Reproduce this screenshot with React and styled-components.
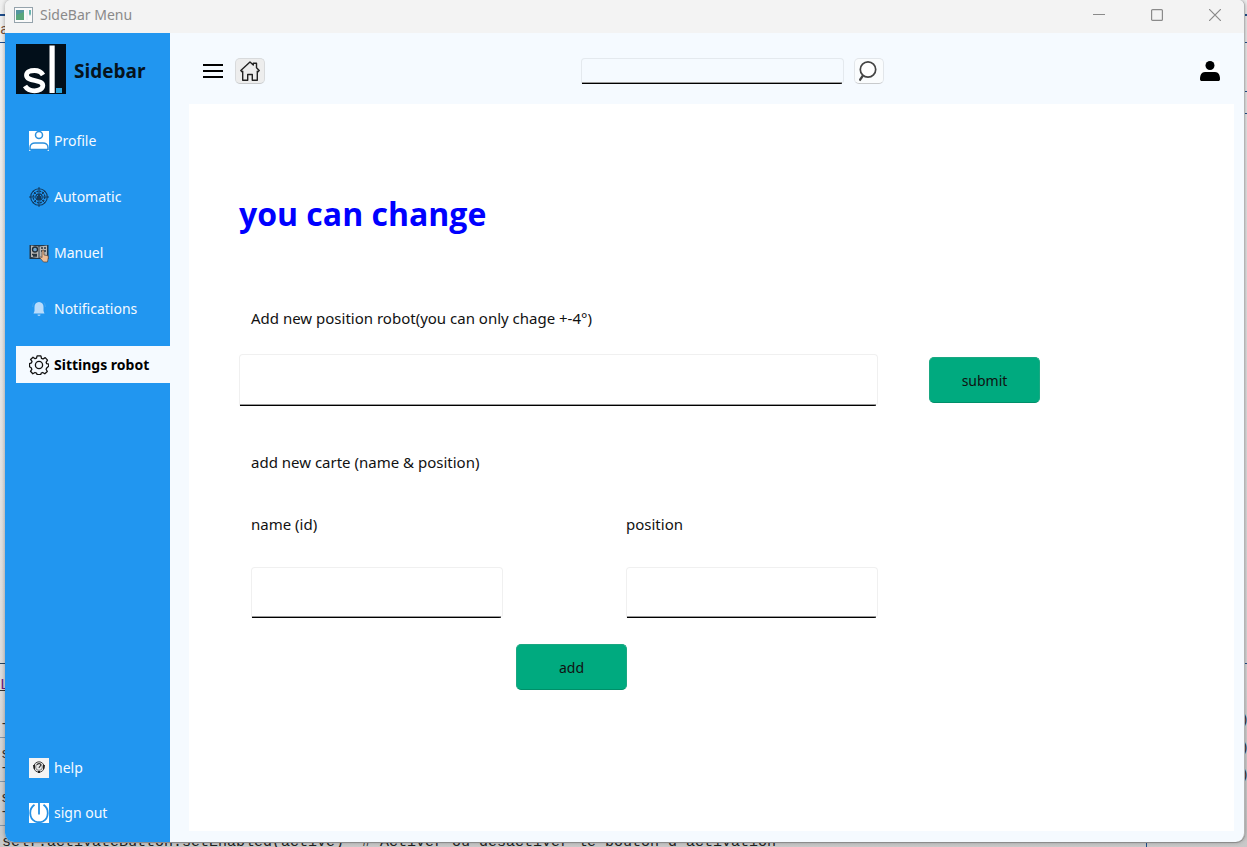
import React from "react";
import styled, { createGlobalStyle } from "styled-components";

const GlobalStyle = createGlobalStyle`
  *, *::before, *::after { box-sizing: border-box; }
  body {
    margin: 0;
    font-family: "Noto Sans", "Open Sans", sans-serif;
    font-size: 15px;
    line-height: 24px;
    color: #111;
  }
  button, input { font: inherit; color: inherit; }
`;

/* ---------- editor visible behind the window ---------- */

const Desktop = styled.div`
  position: relative;
  display: flex;
  min-height: 100vh;
  padding: 0 2px 5px 5px;
  overflow: hidden;
  background: linear-gradient(#f0f0f0, #e6e6e6 40%, #dcdcdc 80%, #c8c8c8);
`;

const Rule = styled.span`
  position: absolute;
  top: ${(p) => p.$y}px;
  ${(p) => (p.$side === "right" ? "right: 0;" : "left: 0;")}
  width: 5px;
  height: ${(p) => p.$h || 1}px;
  background: ${(p) => p.$color || "#1f4e8c"};
`;

const CodeChar = styled.span`
  position: absolute;
  top: ${(p) => p.$y}px;
  ${(p) => (p.$side === "right" ? "right: -2px;" : `left: ${p.$x || 0}px;`)}
  font: 15px/12px "Liberation Mono", monospace;
  color: ${(p) => p.$color || "#333"};
`;

const CodeLine = styled.code`
  position: absolute;
  left: 2px;
  bottom: -6px;
  font: 15px/20px "Liberation Mono", monospace;
  color: #222;
  white-space: pre;
`;

const PageEdge = styled.span`
  position: absolute;
  right: 100px;
  bottom: 0;
  width: 1px;
  height: 8px;
  background: #1f4e8c;
`;

/* ---------- window frame ---------- */

const Window = styled.div`
  position: relative;
  flex: 1;
  display: flex;
  flex-direction: column;
  border-right: 1px solid #b4b4b4;
  border-radius: 6px 6px 9px 9px;
  overflow: hidden;
  background: #f5faff;
  box-shadow: 0 1px 0 #8c8c8c, 0 0 4px rgba(0, 0, 0, 0.35);
`;

const TitleBar = styled.header`
  display: flex;
  align-items: center;
  gap: 7px;
  height: 33px;
  padding: 0 15px 4px 9px;
  background: #f3f3f3;
  color: #8a8a8a;
  font-size: 14px;
`;

const WindowTitle = styled.span`
  flex: 1;
`;

const WindowButtons = styled.div`
  display: flex;
  gap: 30px;
`;

const WindowButton = styled.button`
  display: flex;
  align-items: center;
  justify-content: center;
  width: 28px;
  height: 28px;
  padding: 0;
  border: 0;
  background: none;
  color: #8a8a8a;
`;

const Body = styled.div`
  flex: 1;
  display: flex;
`;

/* ---------- sidebar ---------- */

const Sidebar = styled.aside`
  display: flex;
  flex-direction: column;
  flex: none;
  width: 165px;
  padding: 11px 0 11px 11px;
  background: #2196f0;
`;

const Brand = styled.div`
  display: flex;
  align-items: center;
  gap: 8px;
  height: 50px;
  margin-bottom: 28px;
  color: #06131c;
  font-family: "Open Sans", sans-serif;
  font-size: 19px;
  font-weight: 700;
`;

const BrandName = styled.span`
  padding-top: 4px;
`;

const NavList = styled.nav`
  display: flex;
  flex-direction: column;
  gap: ${(p) => p.$gap}px;
  ${(p) => p.$bottom && "margin-top: auto;"}
`;

const NavItem = styled.a`
  display: flex;
  align-items: center;
  gap: 5px;
  height: 37px;
  padding-left: 13px;
  font-size: 14px;
  white-space: nowrap;
  text-decoration: none;
  color: ${(p) => (p.$active ? "#000" : "#f5faff")};
  background: ${(p) => (p.$active ? "#f5faff" : "transparent")};
  font-weight: ${(p) => (p.$active ? 700 : 400)};
  svg { flex: none; }
`;

/* ---------- main area ---------- */

const Main = styled.main`
  flex: 1;
  display: flex;
  flex-direction: column;
  padding-bottom: 11px;
`;

const TopBar = styled.div`
  display: flex;
  align-items: center;
  justify-content: space-between;
  height: 71px;
  padding: 4px 24px 0 33px;
`;

const Group = styled.div`
  display: flex;
  align-items: center;
  gap: ${(p) => p.$gap}px;
`;

const PlainButton = styled.button`
  display: flex;
  padding: 0;
  border: 0;
  background: none;
`;

const ToolButton = styled.button`
  display: flex;
  align-items: center;
  justify-content: center;
  width: 30px;
  height: 26px;
  padding: 0;
  border: 1px solid ${(p) => (p.$pressed ? "#d8dadc" : "#e2e6ea")};
  border-bottom-color: #c8cacc;
  border-radius: 5px;
  background: ${(p) => (p.$pressed ? "#ededed" : "#fafcfd")};
`;

const TextInput = styled.input`
  width: ${(p) => p.$width || "100%"};
  height: ${(p) => p.$height}px;
  padding: 0 8px;
  border: 1px solid ${(p) => p.$edge || "#f0f0f0"};
  border-bottom-color: transparent;
  border-radius: 4px 4px 4px 0;
  outline: none;
  background: linear-gradient(#9a9a9a 50%, #000 50%) left bottom / calc(100% - 2px) 2px no-repeat border-box;
`;

const Content = styled.section`
  flex: 1;
  margin: 0 10px 0 19px;
  padding: 86px 194px 24px 50px;
  background: #fff;
`;

const Heading = styled.h1`
  margin: 0 0 68px;
  color: #00f;
  font-family: "Open Sans", sans-serif;
  font-size: 32px;
  line-height: 48px;
  font-weight: 700;
`;

const FormGrid = styled.form`
  display: grid;
  grid-template-columns: 1fr 111px;
  column-gap: 51px;
  align-items: center;
`;

const Label = styled.label`
  display: block;
  grid-column: 1 / -1;
  padding-left: 12px;
  margin-bottom: 24px;
`;

const CardForm = styled.form`
  margin: 44px 162px 0 12px;
`;

const SectionTitle = styled.p`
  margin: 0 0 38px;
`;

const Fields = styled.div`
  display: grid;
  grid-template-columns: 1fr 1fr;
  column-gap: 123px;
`;

const FieldLabel = styled.label`
  display: block;
  margin-bottom: 31px;
`;

const Actions = styled.div`
  display: flex;
  justify-content: center;
  padding: 26px 0 0 14px;
`;

const ActionButton = styled.button`
  width: 111px;
  height: 46px;
  padding: 2px 0 0;
  border: 1px solid #1aa882;
  border-bottom-color: #008f69;
  border-radius: 5px;
  background: #00aa7f;
  font-size: 14px;
`;

/* ---------- drawings ---------- */

const AppIcon = () => (
  <svg width="19" height="16" viewBox="0 0 19 16">
    <rect x="0.5" y="0.5" width="18" height="15" fill="#fafafa" stroke="#95a3ac" />
    <rect x="2" y="3" width="8" height="10" fill="#5596a0" />
    <path d="M2 13V8l8-3v8z" fill="#58a67c" />
    <path d="M12 3h2v10h-2z" fill="#eef1f4" />
    <path d="M15 3h2v4l-1 2-1-2z" fill="#69b5b0" />
  </svg>
);

const Logo = () => (
  <svg width="50" height="50" viewBox="0 0 50 50">
    <rect width="50" height="50" fill="#020f1a" />
    <path d="M27 31C25 27.500 22 26.500 18.500 26.500c-4.500 0-8 1.500-8 4.700 0 6.800 16.300 3.800 16.300 10.300 0 3.200-3.800 5.300-8.300 5.300-4 0-7.500-1.500-9.500-4.800" fill="none" stroke="#fff" strokeWidth="4.800" />
    <path d="M33.500 1.500h5.200V49h-5.200z" fill="#fff" />
    <path d="M40 44h6v5h-6z" fill="#2ba3dc" />
  </svg>
);

const ProfileIcon = () => (
  <svg width="20" height="20" viewBox="0 0 20 20">
    <rect width="20" height="20" fill="#fff" />
    <circle cx="10" cy="4" r="3.500" fill="#fff" stroke="#2a8fdc" strokeWidth="1.500" />
    <path d="M1 18.500v-2C1 13.500 3.500 12 6 12h8c2.500 0 5 1.500 5 4.500v2z" fill="#fff" stroke="#2a8fdc" strokeWidth="1.500" />
    <path d="M1.500 19h17v1h-17z" fill="#2196f0" />
  </svg>
);

const AutomaticIcon = () => (
  <svg width="20" height="20" viewBox="0 0 20 20" fill="none" stroke="#123a5e">
    <circle cx="10" cy="10" r="8.300" strokeWidth="1.100" />
    <circle cx="10" cy="10" r="5.800" strokeWidth="1.300" strokeDasharray="2 1" />
    <circle cx="10" cy="10" r="3.200" strokeWidth="1.200" />
    <path d="M10 0v6M10 14v6M0 10h6M14 10h6M4 4l3.500 3.500M16 4l-3.500 3.500M4 16l3.500-3.500M16 16l-3.500-3.500" />
    <path d="M8 9h4v4H8zM9 7h2v2H9z" fill="#123a5e" stroke="none" />
  </svg>
);

const ManualIcon = () => (
  <svg width="20" height="20" viewBox="0 0 20 20">
    <path d="M.5 2h19v14H.5z" fill="#22384a" />
    <path d="M2 2.500l7.500 1V15L2 14zM18 2.500l-7.500 1V15l7.500-1z" fill="#b9b7b4" />
    <circle cx="6" cy="6.500" r="2.500" fill="#6fa3cb" stroke="#1f2c36" strokeWidth="1.300" />
    <path d="M3 11.500h5M12 5h2M15 5h2M12 8h5M4 13h4" stroke="#283640" strokeWidth="1.300" />
    <path d="M13 8c0-1.500 2-1.500 2 0v4l3 .5c1 .3 1.500 1 1.300 2L18.500 19h-4L11 15c-.5-1 .8-1.500 1.300-1l.7.600z" fill="#eebd96" stroke="#554238" strokeWidth=".7" />
  </svg>
);

const BellIcon = () => (
  <svg width="20" height="20" viewBox="0 0 20 20">
    <path d="M10 3c-3 0-4.500 2.200-4.500 5v4L4.500 14.500h11l-1-2.500V8c0-2.800-1.500-5-4.500-5z" fill="#b9dcfb" />
    <path d="M8.500 15.500h3c0 2-3 2-3 0z" fill="#9ccdf8" />
    <path d="M5 3.500C4 5 3.700 6.500 3.700 8M15 3.500C16 5 16.300 6.500 16.300 8" stroke="#4aa7f0" strokeWidth=".8" fill="none" />
  </svg>
);

const GearIcon = () => (
  <svg width="20" height="20" viewBox="0 0 20 20" fill="none" stroke="#111" strokeWidth="1.300" strokeLinejoin="round">
    <path d="M8.100.8h3.800l.6 2.500 1.500.7 2.200-1.400 2.300 2.500-1.400 2.200.6 1.400 2 .5v2l-2 1.800-.6 1.300 1.200 2.200-2.500 2.300-2.100-1.300-1.500.6-.5 1.500H8.100l-.6-1.500-1.500-.6-2.200 1.300-2.300-2.500 1.300-2-.6-1.500-1.700-1V8.600l2-.8.5-1.400-1.400-2L4 2.200l2.100 1.500 1.400-.5z" />
    <circle cx="10" cy="10" r="3.600" />
  </svg>
);

const HelpIcon = () => (
  <svg width="20" height="20" viewBox="0 0 20 20">
    <rect width="20" height="20" fill="#f4f4f4" />
    <circle cx="10" cy="9" r="5.200" fill="#e8e8e8" stroke="#444" />
    <circle cx="10" cy="9" r="3.400" fill="none" stroke="#666" strokeWidth=".8" />
    <path d="M8.500 7c0-2 3.200-2 3.200 0 0 1.500-1.600 1.300-1.600 3" fill="none" stroke="#333" strokeWidth="1.100" />
    <path d="M4 7h2v4H5zM14 7h2l-1 4h-1zM9 13h2v2H9z" fill="#222" />
  </svg>
);

const PowerIcon = () => (
  <svg width="20" height="20" viewBox="0 0 20 20" fill="none" stroke="#2490e4" strokeWidth="1.800">
    <rect width="20" height="20" fill="#fff" stroke="none" />
    <path d="M5.500 1.800C-.7 6 .3 15.500 5.800 18.200c2.600 1.200 5.800 1.200 8.400 0C19.700 15.500 20.700 6 14.500 1.800M10 0v11.500" />
  </svg>
);

const MenuIcon = () => (
  <svg width="20" height="14" viewBox="0 0 20 14">
    <path d="M0 0h20v2H0zM0 6h20v2H0zM0 12h20v2H0z" fill="#000" />
  </svg>
);

const HomeIcon = () => (
  <svg width="20" height="20" viewBox="0 0 20 20" fill="none" stroke="#222" strokeWidth="1.400">
    <path d="M.8 9.500L10 1l3.300 3V2.200h3.200v4.600l2.700 2.700-1.200 1.200-.7-.5v9h-5V13.500H7.700v5.700h-5v-9l-.7.500z" strokeLinejoin="round" />
  </svg>
);

const SearchIcon = () => (
  <svg width="20" height="22" viewBox="0 0 20 22" fill="none" stroke="#444">
    <circle cx="9" cy="9.500" r="7.700" fill="#fff" strokeWidth="1.700" />
    <path d="M4 15.500l-3.500 5" strokeWidth="2.200" />
  </svg>
);

const UserIcon = () => (
  <svg width="20" height="20" viewBox="0 0 20 20">
    <rect width="20" height="20" fill="#fff" />
    <circle cx="10" cy="4.500" r="4.500" fill="#000" />
    <path d="M0 18c0-4 1.500-7 5-7h10c3.500 0 5 3 5 7 0 1.500-.7 2-2 2H2c-1.300 0-2-.5-2-2z" fill="#000" />
  </svg>
);

const navItems = [
  { label: "Profile", Icon: ProfileIcon },
  { label: "Automatic", Icon: AutomaticIcon },
  { label: "Manuel", Icon: ManualIcon },
  { label: "Notifications", Icon: BellIcon },
  { label: "Sittings robot", Icon: GearIcon, active: true },
];

const footerItems = [
  { label: "help", Icon: HelpIcon },
  { label: "sign out", Icon: PowerIcon },
];

const Nav = ({ items, gap, bottom }) => (
  <NavList $gap={gap} $bottom={bottom}>
    {items.map(({ label, Icon, active }) => (
      <NavItem key={label} href="#" $active={active}>
        <Icon />
        {label}
      </NavItem>
    ))}
  </NavList>
);

const Backdrop = () => (
  <div aria-hidden="true">
    <Rule $y={14} $h={2} />
    <Rule $y={42} />
    <CodeChar $y={25} $color="#7a5038">a</CodeChar>
    <Rule $y={663} $color="#27455f" />
    <CodeChar $y={680} $color="#6a2080">L</CodeChar>
    <Rule $y={690} $color="#333" />
    {[719, 763, 807].map((y) => (
      <CodeChar key={y} $y={y}>-</CodeChar>
    ))}
    <CodeChar $y={749} $x={1}>s</CodeChar>
    <CodeChar $y={793} $x={1}>s</CodeChar>
    {[737, 781, 825].map((y) => (
      <Rule key={y} $y={y} $color="#8296aa" />
    ))}
    <Rule $side="right" $y={14} $h={2} />
    {[42, 91, 113, 663].map((y) => (
      <Rule key={y} $side="right" $y={y} />
    ))}
    {[715, 743, 770].map((y) => (
      <CodeChar key={y} $side="right" $y={y}>)</CodeChar>
    ))}
    <CodeLine>{"self.activateButton.setEnabled(active)  # Activer ou désactiver le bouton d'activation"}</CodeLine>
    <PageEdge />
  </div>
);

export default function App() {
  const stop = (e) => e.preventDefault();
  return (
    <>
      <GlobalStyle />
      <Desktop>
        <Backdrop />
        <Window>
          <TitleBar>
            <AppIcon />
            <WindowTitle>SideBar Menu</WindowTitle>
            <WindowButtons>
              <WindowButton aria-label="Minimize">
                <svg width="12" height="12" stroke="currentColor"><path d="M0 5.500h12" /></svg>
              </WindowButton>
              <WindowButton aria-label="Maximize">
                <svg width="12" height="12" fill="none" stroke="currentColor" strokeWidth="1.200"><rect x=".6" y=".6" width="10.800" height="10.800" rx="1" /></svg>
              </WindowButton>
              <WindowButton aria-label="Close">
                <svg width="12" height="12" stroke="currentColor" strokeWidth="1.200"><path d="M0 0l12 12M12 0L0 12" /></svg>
              </WindowButton>
            </WindowButtons>
          </TitleBar>
          <Body>
            <Sidebar>
              <Brand>
                <Logo />
                <BrandName>Sidebar</BrandName>
              </Brand>
              <Nav items={navItems} gap={19} />
              <Nav items={footerItems} gap={8} bottom />
            </Sidebar>
            <Main>
              <TopBar>
                <Group $gap={12}>
                  <PlainButton aria-label="Menu"><MenuIcon /></PlainButton>
                  <ToolButton $pressed aria-label="Home"><HomeIcon /></ToolButton>
                </Group>
                <Group $gap={10}>
                  <TextInput type="search" aria-label="Search" $width="263px" $height={26} $edge="#e4e9ee" />
                  <ToolButton aria-label="Run search"><SearchIcon /></ToolButton>
                </Group>
                <PlainButton aria-label="Account"><UserIcon /></PlainButton>
              </TopBar>
              <Content>
                <Heading>you can change</Heading>
                <FormGrid onSubmit={stop}>
                  <Label htmlFor="robot-position">Add new position robot(you can only chage +-4°)</Label>
                  <TextInput id="robot-position" $height={52} />
                  <ActionButton type="submit">submit</ActionButton>
                </FormGrid>
                <CardForm onSubmit={stop}>
                  <SectionTitle>add new carte (name &amp; position)</SectionTitle>
                  <Fields>
                    <div>
                      <FieldLabel htmlFor="card-name">name (id)</FieldLabel>
                      <TextInput id="card-name" $height={51} />
                    </div>
                    <div>
                      <FieldLabel htmlFor="card-position">position</FieldLabel>
                      <TextInput id="card-position" $height={51} />
                    </div>
                  </Fields>
                  <Actions>
                    <ActionButton type="submit">add</ActionButton>
                  </Actions>
                </CardForm>
              </Content>
            </Main>
          </Body>
        </Window>
      </Desktop>
    </>
  );
}
